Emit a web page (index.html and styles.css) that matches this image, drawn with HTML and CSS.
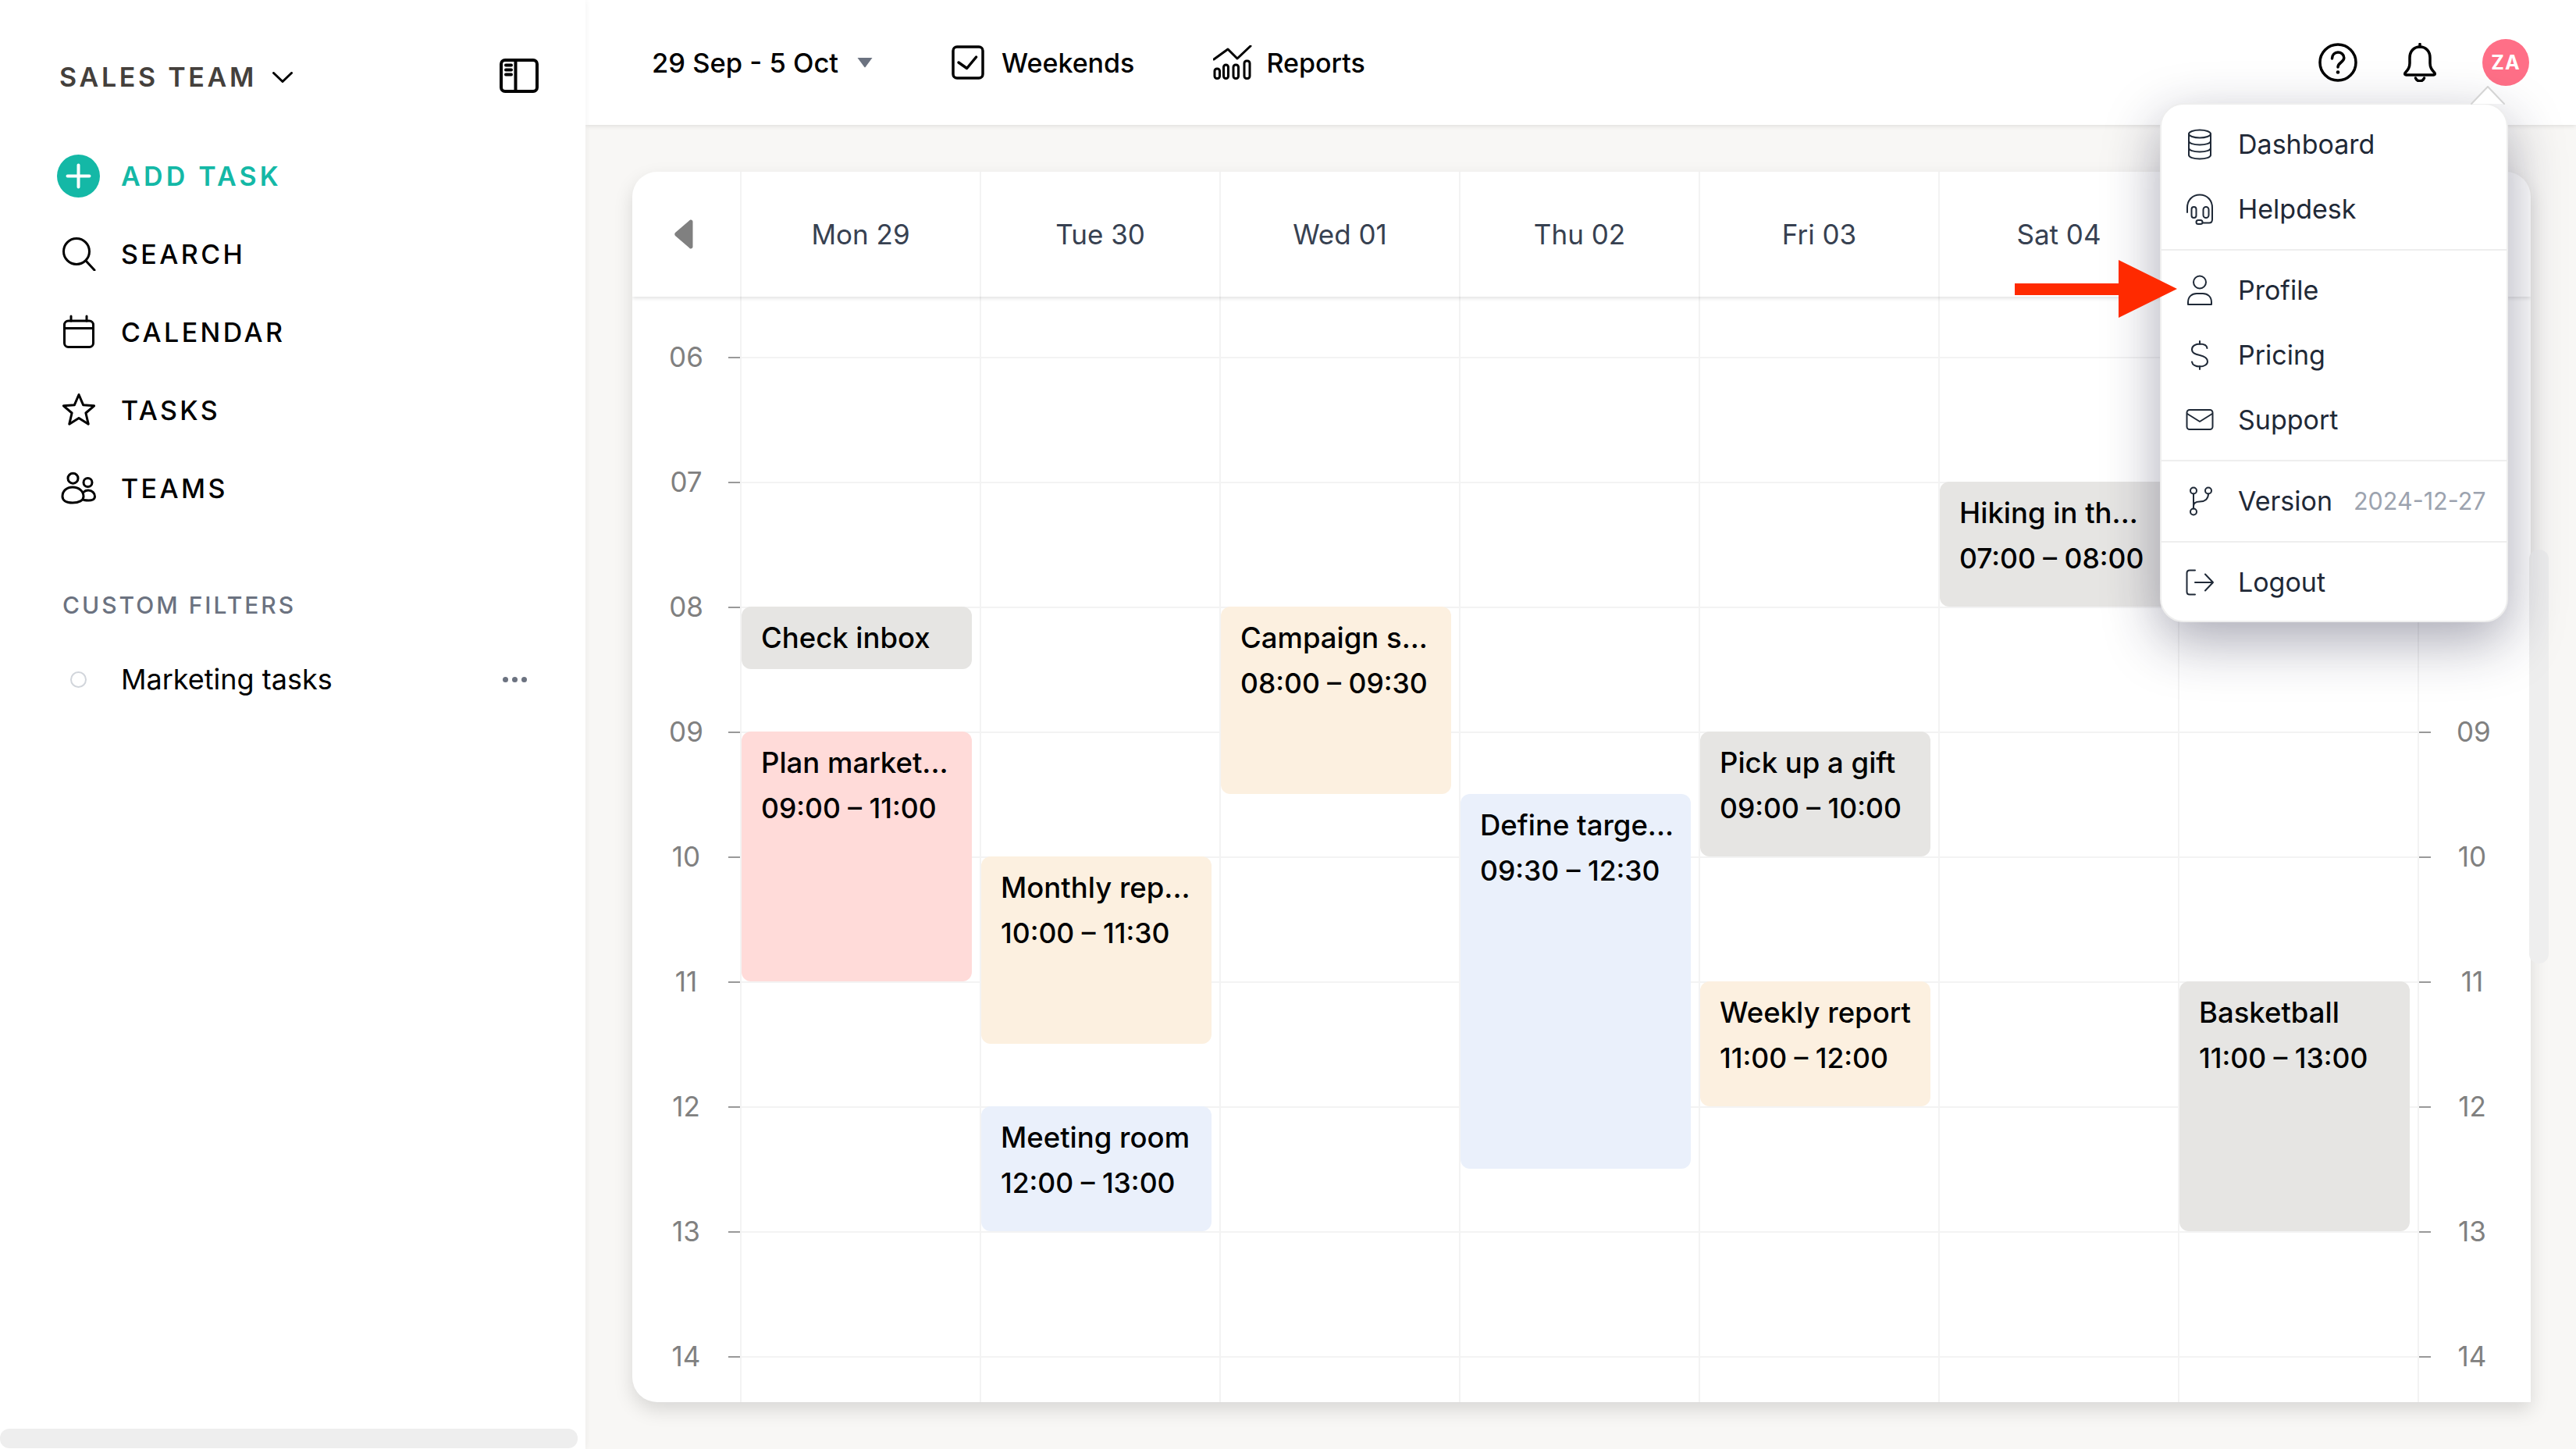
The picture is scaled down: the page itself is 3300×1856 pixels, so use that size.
FILE: index.html
```html
<!DOCTYPE HTML>
<html>

<head>
  <meta charset="utf-8" />
  <title>Calendar</title>
  <link rel="stylesheet" href="styles.css">
</head>

<body>
  <aside class="sidebar">
    <div class="team-row">
      <span class="team-name">SALES TEAM</span>
      <svg class="team-chevron" width="26" height="14" viewBox="0 0 26 14"><path d="M1.5 1.5 13 12.5 24.5 1.5" /></svg>
      <svg class="panel-icon" width="50" height="44" viewBox="0 0 50 44">
        <rect x="2" y="2" width="46" height="40" rx="5" />
        <path d="M20.5 2v40" />
        <path class="panel-bars" d="M8 8.5h7M8 14.5h7M8 20.5h7" />
      </svg>
    </div>

    <nav class="nav">
      <a class="nav-item nav-add">
        <span class="nav-icon">
          <svg width="55" height="55" viewBox="0 0 55 55">
            <circle class="add-disc" cx="27.5" cy="27.5" r="27.5" />
            <path class="add-plus" d="M27.5 13.5v28M13.5 27.5h28" />
          </svg>
        </span>
        ADD TASK
      </a>
      <a class="nav-item">
        <span class="nav-icon">
          <svg width="44" height="44" viewBox="0 0 44 44"><circle cx="19" cy="19" r="16.5" /><path d="M31 31l11 12" /></svg>
        </span>
        SEARCH
      </a>
      <a class="nav-item">
        <span class="nav-icon">
          <svg width="44" height="44" viewBox="0 0 44 44"><rect x="3.5" y="8" width="37" height="33.500" rx="5" /><path d="M3.500 17.500h37M12 2v6M32 2v6" /></svg>
        </span>
        CALENDAR
      </a>
      <a class="nav-item">
        <span class="nav-icon">
          <svg width="44" height="44" viewBox="0 0 44 44"><path d="M22 2.500l5.600 13.200 14 1.100-10.700 9.200 3.300 14.200L22 32.600 9.800 40.200l3.300-14.200L2.400 16.800l14-1.100z" /></svg>
        </span>
        TASKS
      </a>
      <a class="nav-item">
        <span class="nav-icon">
          <svg width="46" height="44" viewBox="0 0 46 44">
            <circle cx="15.500" cy="9.700" r="6.500" />
            <circle cx="34.500" cy="15" r="5.500" />
            <path d="M2 33c0-7 5-12 13-12s14 5 14 12c0 5-6 8-14 8S2 38 2 33z" />
            <path d="M29.500 27c1.500-1.500 3.500-2 5.500-2 5 0 8.500 3.500 8.500 8 0 3.500-4 5-8 5-2 0-4-.2-6-.5" />
          </svg>
        </span>
        TEAMS
      </a>
    </nav>

    <p class="filters-title">CUSTOM FILTERS</p>
    <div class="filter-row">
      <span class="nav-icon"><span class="filter-dot"></span></span>
      <span class="filter-name">Marketing tasks</span>
      <span class="filter-more"><i></i><i></i><i></i></span>
    </div>
    <div class="side-scroll"></div>
  </aside>

  <main class="main">
    <header class="topbar">
      <span class="range">29 Sep - 5 Oct</span>
      <svg class="range-caret" width="22" height="14" viewBox="0 0 22 14"><path d="M1.500 1h19L11.800 12.700a1 1 0 0 1-1.600 0z" /></svg>
      <svg class="top-icon check-icon" width="42" height="44" viewBox="0 0 42 44">
        <rect x="2" y="2" width="38" height="40" rx="5" />
        <path d="M9 22l10.600 7.500L31.600 15" />
      </svg>
      <span class="top-label">Weekends</span>
      <svg class="top-icon report-icon" width="50" height="44" viewBox="0 0 50 44">
        <path d="M1 18 19 5l12 12L48 1" />
        <rect x="2" y="30" width="6.500" height="12.500" rx="3" />
        <rect x="13.500" y="25" width="6" height="17.500" rx="3" />
        <rect x="26" y="25" width="6.500" height="17.500" rx="3" />
        <rect x="40" y="20" width="7" height="22.500" rx="3" />
      </svg>
      <span class="top-label">Reports</span>

      <div class="top-right">
        <svg class="top-icon" width="50" height="50" viewBox="0 0 50 50">
          <circle cx="25" cy="25" r="23" />
          <path d="M17.500 20c0-5 3.500-8 7.500-8s7.800 2.700 7.800 7c0 6-7.800 6-7.800 12" />
          <circle class="icon-dot" cx="25" cy="37.500" r="2.300" />
        </svg>
        <svg class="top-icon bell-icon" width="44" height="50" viewBox="0 0 44 50">
          <path d="M22 5c-8 0-13 6-13 14v7c0 6-2.500 8.500-6 12.500-.8 1.500 0 2.500 1.500 2.500h35c1.500 0 2.300-1 1.500-2.500-3.500-4-6-6.500-6-12.500v-7c0-8-5-14-13-14z" />
          <path d="M22 1.500V5M16.500 45c1 3 3 3.800 5.500 3.800s4.500-.8 5.500-3.800" />
        </svg>
        <span class="avatar">ZA</span>
      </div>
    </header>

    <section class="content">
      <div class="calendar">
        <div class="cal-head">
          <div class="head-corner">
            <svg width="24" height="38" viewBox="0 0 24 38"><path d="M21 .5c1.500 0 2.500 1 2.500 2.500v32c0 1.500-1 2.500-2.500 2.500-1 0-1.500-.5-2.500-1.500L1 21c-1-1-1-3 0-4L18.500 2c1-1 1.500-1.500 2.500-1.500z" /></svg>
          </div>
          <div class="head-day">Mon 29</div>
          <div class="head-day">Tue 30</div>
          <div class="head-day">Wed 01</div>
          <div class="head-day">Thu 02</div>
          <div class="head-day">Fri 03</div>
          <div class="head-day">Sat 04</div>
          <div class="head-day"></div>
          <div class="head-day"></div>
        </div>

        <div class="cal-body">
          <div class="hours hours-left">
            <div class="hour"><span>06</span><i></i></div>
            <div class="hour"><span>07</span><i></i></div>
            <div class="hour"><span>08</span><i></i></div>
            <div class="hour"><span>09</span><i></i></div>
            <div class="hour"><span>10</span><i></i></div>
            <div class="hour"><span>11</span><i></i></div>
            <div class="hour"><span>12</span><i></i></div>
            <div class="hour"><span>13</span><i></i></div>
            <div class="hour"><span>14</span><i></i></div>
          </div>

          <div class="day">
            <div class="event grey from-0800 len-1"><b>Check inbox</b></div>
            <div class="event pink from-0900 len-4"><b>Plan market...</b><b>09:00 – 11:00</b></div>
          </div>
          <div class="day">
            <div class="event cream from-1000 len-3"><b>Monthly rep...</b><b>10:00 – 11:30</b></div>
            <div class="event blue from-1200 len-2"><b>Meeting room</b><b>12:00 – 13:00</b></div>
          </div>
          <div class="day">
            <div class="event cream from-0800 len-3"><b>Campaign s...</b><b>08:00 – 09:30</b></div>
          </div>
          <div class="day">
            <div class="event blue from-0930 len-6"><b>Define targe...</b><b>09:30 – 12:30</b></div>
          </div>
          <div class="day">
            <div class="event grey from-0900 len-2"><b>Pick up a gift</b><b>09:00 – 10:00</b></div>
            <div class="event cream from-1100 len-2"><b>Weekly report</b><b>11:00 – 12:00</b></div>
          </div>
          <div class="day">
            <div class="event grey from-0700 len-2"><b>Hiking in th...</b><b>07:00 – 08:00</b></div>
          </div>
          <div class="day">
            <div class="event grey from-1100 len-4"><b>Basketball</b><b>11:00 – 13:00</b></div>
          </div>

          <div class="hours hours-right">
            <div class="hour"><i></i></div>
            <div class="hour"><i></i></div>
            <div class="hour"><i></i></div>
            <div class="hour"><i></i><span>09</span></div>
            <div class="hour"><i></i><span>10</span></div>
            <div class="hour"><i></i><span>11</span></div>
            <div class="hour"><i></i><span>12</span></div>
            <div class="hour"><i></i><span>13</span></div>
            <div class="hour"><i></i><span>14</span></div>
          </div>
        </div>
      </div>
    </section>
  </main>

  <div class="main-scroll"></div>

  <div class="menu">
    <svg class="menu-tip" width="44" height="24" viewBox="0 0 44 24"><path d="M1 23 22 1l21 22" /></svg>
    <div class="menu-group">
      <a class="menu-item">
        <svg width="36" height="40" viewBox="0 0 36 40"><ellipse cx="18" cy="6.500" rx="14" ry="5" /><path d="M4 6.500v27c0 3 6 5 14 5s14-2 14-5v-27M4 15.500c0 3 6 5 14 5s14-2 14-5M4 24.500c0 3 6 5 14 5s14-2 14-5" /></svg>
        Dashboard
      </a>
      <a class="menu-item">
        <svg width="36" height="40" viewBox="0 0 36 40"><path d="M2 24v-6C2 8 9 1.500 18 1.500S34 8 34 18v15c0 2.500-1.500 4.500-4 4.500h-8" /><rect x="7.500" y="17" width="6" height="14" rx="3" /><rect x="22.500" y="17" width="7" height="14" rx="3.500" /><rect x="13.500" y="34" width="8" height="5" rx="2.500" /></svg>
        Helpdesk
      </a>
    </div>
    <div class="menu-group">
      <a class="menu-item">
        <svg width="36" height="40" viewBox="0 0 36 40"><circle cx="18" cy="9.500" r="8" /><path d="M3 38v-3c0-7 5-11 11-11h8c6 0 11 4 11 11v3z" /></svg>
        Profile
      </a>
      <a class="menu-item">
        <svg width="36" height="40" viewBox="0 0 36 40"><path d="M18 2v4M18 34v4M27.500 11c-.5-3.500-4-5.500-9.500-5.500S8 8 8 12.500 11.500 18.500 18 20s10 4 10 8-4.500 6.500-10 6.500S8.500 32 8 28.500" /></svg>
        Pricing
      </a>
      <a class="menu-item">
        <svg width="36" height="40" viewBox="0 0 36 40"><rect x="1.500" y="7" width="33" height="25" rx="3.500" /><path d="M2 12l16 10 16-10" /></svg>
        Support
      </a>
    </div>
    <div class="menu-group">
      <a class="menu-item">
        <svg width="36" height="40" viewBox="0 0 36 40"><circle cx="10" cy="6.500" r="4" /><circle cx="29" cy="6.500" r="4" /><circle cx="10" cy="33.500" r="4" /><path d="M10 10.500v19M29 10.500c0 7-5 10-11 10-4.500 0-8 2-8 6" /></svg>
        Version
        <span class="menu-date">2024-12-27</span>
      </a>
    </div>
    <div class="menu-group">
      <a class="menu-item">
        <svg width="36" height="40" viewBox="0 0 36 40"><path d="M12 4.500H5c-2 0-3.500 1.500-3.500 3.500v24c0 2 1.500 3.500 3.500 3.500h7M12 20h23M25 9.500 35 20 25 30.500" /></svg>
        Logout
      </a>
    </div>
  </div>

  <svg class="red-arrow" width="208" height="74" viewBox="0 0 208 74">
    <path d="M0 30h133V0l75 37-75 37V45H0z" />
  </svg>
</body>

</html>
```

FILE: styles.css
```css
* {
  box-sizing: border-box;
}

body {
  display: flex;
  width: 3300px;
  height: 1856px;
  margin: 0;
  overflow: hidden;
  position: relative;
  font-family: Inter, 'Noto Sans', sans-serif;
  background-color: #f8f7f5;
  color: #000;
}

svg {
  display: block;
  flex: none;
  fill: none;
  stroke: currentColor;
  stroke-linecap: round;
  stroke-linejoin: round;
}

/* sidebar */
.sidebar {
  position: relative;
  width: 750px;
  flex: none;
  padding-left: 73px;
  background-color: #fff;
  box-shadow: 0 0 8px rgba(0, 0, 0, 0.06);
  z-index: 2;
}

.team-row {
  display: flex;
  align-items: center;
  height: 44px;
  margin-top: 75px;
  padding-left: 3px;
}

.team-name {
  padding-top: 3px;
  font-size: 34px;
  font-weight: 600;
  letter-spacing: 3.7px;
  color: #44403c;
}

.team-chevron {
  margin-top: 3px;
  margin-left: 20px;
  stroke-width: 3;
}

.panel-icon {
  margin-left: auto;
  margin-right: 60px;
  stroke-width: 4;
}

.nav {
  display: flex;
  flex-direction: column;
  margin-top: 56px;
}

.nav-item {
  display: flex;
  align-items: center;
  height: 100px;
  font-size: 34px;
  font-weight: 500;
  letter-spacing: 3.4px;
}

.nav-icon {
  display: flex;
  justify-content: center;
  align-items: center;
  width: 55px;
  margin-right: 27px;
}

.nav-icon svg {
  stroke-width: 3;
}

.nav-add {
  font-weight: 600;
  letter-spacing: 4.2px;
  color: #14b8a6;
}

.add-disc {
  fill: #14b8a6;
  stroke: none;
}

.nav-icon .add-plus {
  stroke: #fff;
  stroke-width: 4;
}

.filters-title {
  margin: 82px 0 0 7px;
  font-size: 30px;
  font-weight: 500;
  line-height: 36px;
  letter-spacing: 3px;
  color: #6b7280;
}

.filter-row {
  display: flex;
  align-items: center;
  height: 60px;
  margin-top: 47px;
}

.filter-dot {
  width: 21px;
  height: 21px;
  border: 2px solid #d1d5db;
  border-radius: 50%;
}

.filter-name {
  font-size: 36px;
}

.filter-more {
  display: flex;
  gap: 5px;
  margin-left: auto;
  margin-right: 75px;
}

.filter-more i {
  width: 7px;
  height: 7px;
  border-radius: 50%;
  background-color: #6b7280;
}

.side-scroll {
  position: absolute;
  left: 0;
  bottom: 1px;
  width: 740px;
  height: 25px;
  border-radius: 12px;
  background-color: #eee;
}

/* topbar */
.main {
  display: flex;
  flex-direction: column;
  flex: 1;
  min-width: 0;
}

.topbar {
  display: flex;
  align-items: center;
  flex: none;
  height: 160px;
  padding: 0 60px 0 85px;
  background-color: #fff;
  box-shadow: 0 1px 6px rgba(0, 0, 0, 0.12);
  z-index: 1;
}

.range {
  font-size: 34.5px;
  font-weight: 500;
}

.top-label {
  font-size: 34px;
  font-weight: 500;
}

.range-caret {
  margin-left: 23px;
  fill: #6b7280;
  stroke: none;
}

.top-icon {
  stroke-width: 3.500;
}

.check-icon {
  margin-left: 100px;
  margin-right: 22px;
}

.report-icon {
  margin-left: 101px;
  margin-right: 18px;
  stroke-width: 3;
}

.top-right {
  display: flex;
  align-items: center;
  margin-left: auto;
}

.icon-dot {
  fill: currentColor;
  stroke: none;
}

.bell-icon {
  margin-left: 58px;
  margin-right: 58px;
}

.avatar {
  display: flex;
  justify-content: center;
  align-items: center;
  width: 60px;
  height: 60px;
  border-radius: 50%;
  background-color: #ff6f87;
  color: #fff;
  font-size: 25px;
  font-weight: 700;
  letter-spacing: 1px;
}

/* calendar */
.content {
  flex: 1;
  padding: 60px 58px 60px 60px;
}

.calendar {
  height: 1576px;
  overflow: hidden;
  border-radius: 32px 32px 0 32px;
  background-color: #fff;
  box-shadow: 0 10px 24px rgba(0, 0, 0, 0.13);
}

.cal-head,
.cal-body {
  display: grid;
  grid-template-columns: 138px repeat(7, 307px) 145px;
}

.cal-head {
  position: relative;
  height: 160px;
  box-shadow: 0 2px 5px rgba(0, 0, 0, 0.12);
}

.head-corner {
  display: flex;
  align-items: center;
  padding-left: 54px;
  color: #808080;
}

.head-corner path {
  fill: currentColor;
  stroke: none;
}

.head-day {
  display: flex;
  justify-content: center;
  align-items: center;
  border-left: 2px solid #f3f3f3;
  font-size: 35px;
  color: #374151;
}

.hours {
  margin-top: -2px;
  color: #808080;
  font-size: 35px;
}

.hours-right {
  border-left: 2px solid #f3f3f3;
  margin-top: 0;
}

.hour {
  display: flex;
  align-items: center;
  height: 160px;
}

.hours-right .hour {
  position: relative;
  top: -2px;
}

.hour span {
  flex: none;
  padding-bottom: 2px;
  text-align: center;
}

.hours-left .hour span {
  margin-left: 30px;
  width: 78px;
}

.hours-right .hour span {
  margin-left: 33px;
  width: 40px;
}

.hour i {
  flex: none;
  width: 15px;
  height: 2px;
  background-color: #999;
}

.hours-left .hour i {
  margin-left: auto;
}

.day {
  display: grid;
  grid-template-rows: repeat(18, 80px);
  height: 1416px;
  padding-top: 77px;
  border-left: 2px solid #f3f3f3;
  background-image: linear-gradient(to bottom, #f3f3f3 2px, transparent 2px);
  background-size: 100% 160px;
  background-position: 0 77px;
}

.event {
  display: flex;
  flex-direction: column;
  gap: 15px;
  width: 295px;
  padding: 19px 0 0 25px;
  border-radius: 12px;
}

.event b {
  font-size: 36.5px;
  font-weight: 500;
  line-height: 43px;
  white-space: nowrap;
}

.event b + b {
  font-size: 35.5px;
}

.grey { background-color: #e6e5e3; }
.pink { background-color: #ffdbd9; }
.cream { background-color: #fcf0e0; }
.blue { background-color: #eaf0fb; }

/* rows are half hours, 06:00 is row 1 */
.from-0700 { grid-row-start: 3; }
.from-0800 { grid-row-start: 5; }
.from-0900 { grid-row-start: 7; }
.from-0930 { grid-row-start: 8; }
.from-1000 { grid-row-start: 9; }
.from-1100 { grid-row-start: 11; }
.from-1200 { grid-row-start: 13; }

.len-1 { grid-row-end: span 1; }
.len-2 { grid-row-end: span 2; }
.len-3 { grid-row-end: span 3; }
.len-4 { grid-row-end: span 4; }
.len-6 { grid-row-end: span 6; }

.main-scroll {
  position: absolute;
  left: 3240px;
  top: 704px;
  width: 25px;
  height: 530px;
  border-radius: 12px;
  background-color: #eee;
  z-index: 3;
}

/* user menu */
.menu {
  position: absolute;
  left: 2767px;
  top: 132px;
  width: 446px;
  height: 665px;
  border: 2px solid #eee;
  border-radius: 30px;
  background-color: #fff;
  box-shadow: 0 24px 70px rgba(30, 30, 60, 0.38);
  z-index: 4;
}

.menu-tip {
  position: absolute;
  left: 396px;
  top: -24px;
  fill: #fff;
  stroke: #d4d4d4;
  stroke-width: 2;
}

.menu-group {
  padding: 9px 0 10px;
  border-bottom: 2px solid #eee;
}

.menu-group:first-child {
  padding-top: 8px;
}

.menu-group:last-child {
  border-bottom: none;
}

.menu-item {
  display: flex;
  align-items: center;
  height: 83px;
  padding-left: 31px;
  font-size: 34px;
  color: #1f2937;
}

.menu-item svg {
  margin-right: 31px;
  stroke-width: 2;
}

.menu-date {
  margin-left: 27px;
  font-size: 30.5px;
  color: #9ca3af;
}

.red-arrow {
  position: absolute;
  left: 2581px;
  top: 333px;
  fill: #ff2a00;
  stroke: none;
  z-index: 5;
}
```
